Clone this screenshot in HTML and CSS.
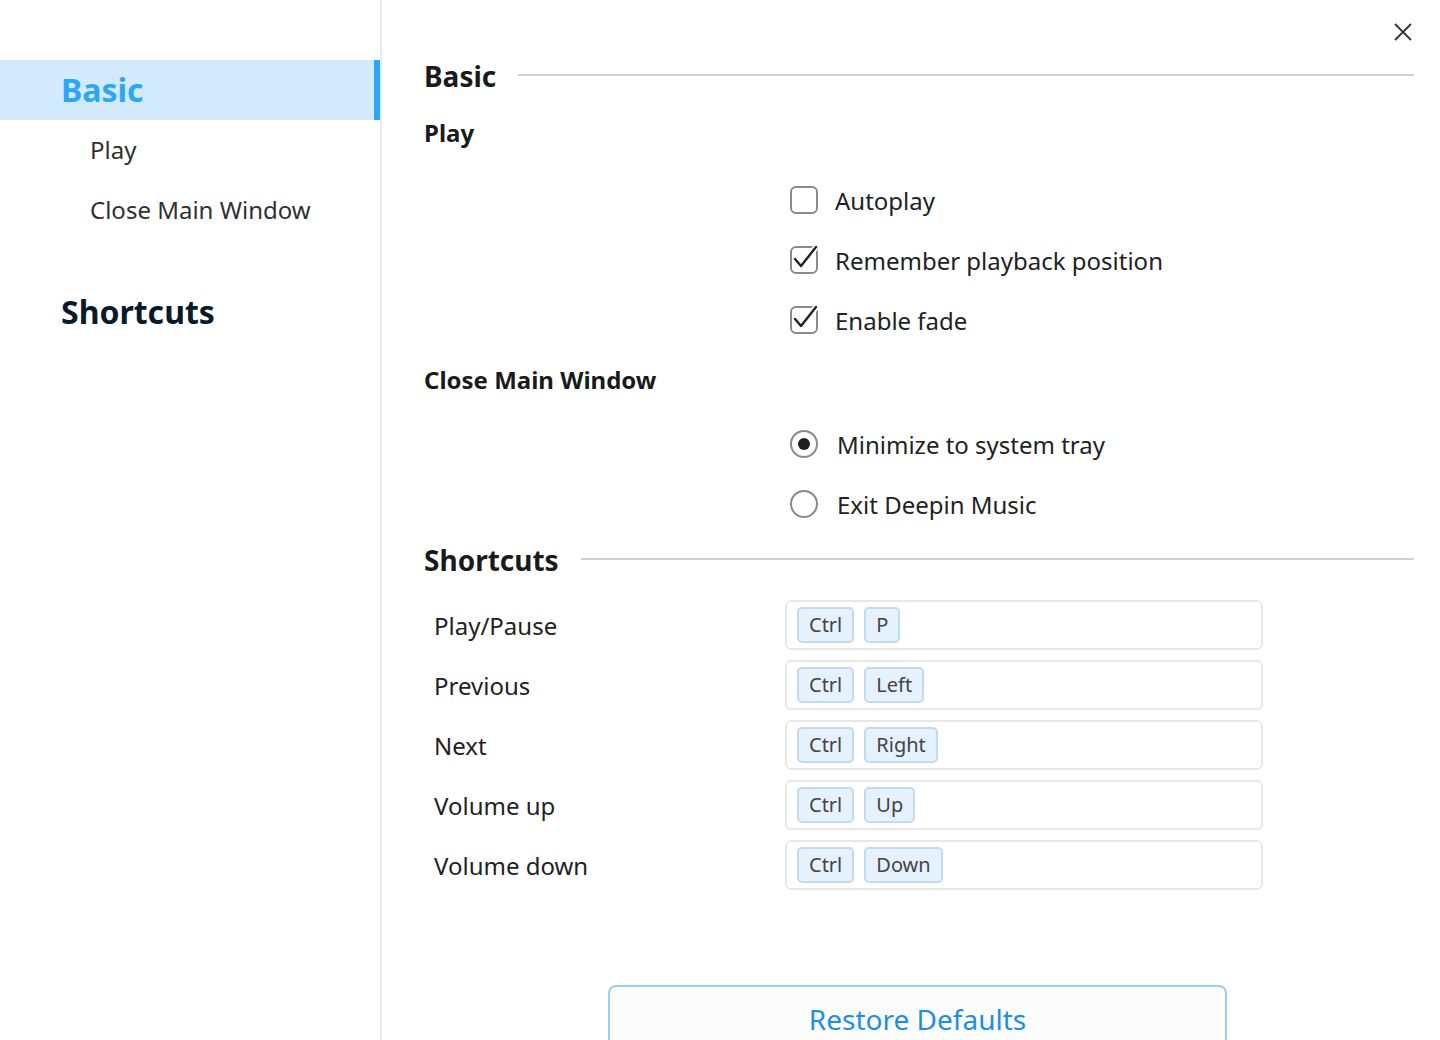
FILE: index.html
```html
<!DOCTYPE html>
<html>
<head>
<meta charset="utf-8">
<link rel="stylesheet" href="styles.css">
</head>
<body>
<div class="window">
  <nav class="sidebar">
    <div class="nav-group active">Basic</div>
    <div class="nav-item">Play</div>
    <div class="nav-item">Close Main Window</div>
    <div class="nav-group second">Shortcuts</div>
  </nav>
  <main class="content">
    <button class="close" aria-label="Close">
      <svg width="18" height="18" viewBox="0 0 18 18"><path d="M1 1L17 17M17 1L1 17" stroke="#333" stroke-width="1.8" fill="none"/></svg>
    </button>
    <div class="section-head"><span>Basic</span><div class="rule"></div></div>
    <div class="sub-head play-head">Play</div>
    <div class="options">
      <label class="opt"><svg class="cb" width="28" height="28" viewBox="0 0 28 28"><rect x="1" y="1" width="26" height="26" rx="5" fill="none" stroke="#8a8a8a" stroke-width="2"/></svg><span>Autoplay</span></label>
      <label class="opt"><svg class="cb" width="28" height="28" viewBox="0 0 28 28"><rect x="1" y="1" width="26" height="26" rx="5" fill="none" stroke="#8a8a8a" stroke-width="2"/><path d="M5 13L11 20L26 1" stroke="#fff" stroke-width="6" fill="none" stroke-linecap="round" stroke-linejoin="round"/><path d="M5 13L11 20L26 1" stroke="#222" stroke-width="2.4" fill="none" stroke-linecap="round" stroke-linejoin="round"/></svg><span>Remember playback position</span></label>
      <label class="opt"><svg class="cb" width="28" height="28" viewBox="0 0 28 28"><rect x="1" y="1" width="26" height="26" rx="5" fill="none" stroke="#8a8a8a" stroke-width="2"/><path d="M5 13L11 20L26 1" stroke="#fff" stroke-width="6" fill="none" stroke-linecap="round" stroke-linejoin="round"/><path d="M5 13L11 20L26 1" stroke="#222" stroke-width="2.4" fill="none" stroke-linecap="round" stroke-linejoin="round"/></svg><span>Enable fade</span></label>
    </div>
    <div class="sub-head close-head">Close Main Window</div>
    <div class="options radios">
      <label class="opt"><span class="rb on"></span><span>Minimize to system tray</span></label>
      <label class="opt"><span class="rb"></span><span>Exit Deepin Music</span></label>
    </div>
    <div class="section-head shortcuts-head"><span>Shortcuts</span><div class="rule"></div></div>
    <div class="shortcuts">
      <div class="sc-row"><span class="sc-label">Play/Pause</span><div class="sc-box"><span class="key">Ctrl</span><span class="key">P</span></div></div>
      <div class="sc-row"><span class="sc-label">Previous</span><div class="sc-box"><span class="key">Ctrl</span><span class="key">Left</span></div></div>
      <div class="sc-row"><span class="sc-label">Next</span><div class="sc-box"><span class="key">Ctrl</span><span class="key">Right</span></div></div>
      <div class="sc-row"><span class="sc-label">Volume up</span><div class="sc-box"><span class="key">Ctrl</span><span class="key">Up</span></div></div>
      <div class="sc-row"><span class="sc-label">Volume down</span><div class="sc-box"><span class="key">Ctrl</span><span class="key">Down</span></div></div>
    </div>
    <div class="btn-wrap"><button class="restore">Restore Defaults</button></div>
  </main>
</div>
</body>
</html>
```

FILE: styles.css
```css
html, body {
  margin: 0;
  padding: 0;
  background: #fff;
  height: 1040px;
  overflow: hidden;
}
body {
  font-family: "Noto Sans", "Open Sans", sans-serif;
  color: #1f1f1f;
}
.window {
  display: flex;
  height: 1040px;
}
.sidebar {
  width: 380px;
  flex: none;
  border-right: 2px solid #ececec;
  padding-top: 60px;
}
.nav-group {
  height: 60px;
  line-height: 60px;
  padding-left: 61px;
  font-size: 32px;
  font-weight: 700;
  color: #0a1a2b;
}
.nav-group.active {
  background: #d3eafd;
  color: #2ca7f8;
  box-shadow: inset -6px 0 0 #2ca7f8;
}
.nav-group.second {
  margin-top: 42px;
}
.nav-item {
  height: 60px;
  line-height: 60px;
  padding-left: 90px;
  font-size: 24px;
  color: #303030;
}
.content {
  flex: 1;
  position: relative;
  padding: 46px 26px 0 42px;
}
.close {
  position: absolute;
  top: 23px;
  right: 28px;
  width: 18px;
  height: 18px;
  padding: 0;
  border: 0;
  background: none;
}
.section-head {
  display: flex;
  align-items: center;
  height: 60px;
  gap: 22px;
}
.section-head span {
  font-size: 28px;
  font-weight: 700;
  color: #1a1a1a;
}
.rule {
  flex: 1;
  height: 2px;
  background: #d0d0d0;
  margin-top: -2px;
}
.sub-head {
  font-size: 24px;
  font-weight: 700;
  color: #1a1a1a;
  height: 54px;
  line-height: 54px;
}
.play-head {
  margin-bottom: 10px;
}
.close-head {
  height: 58px;
  line-height: 58px;
  margin-top: 1px;
  margin-bottom: 5px;
}
.options {
  padding-left: 366px;
}
.opt {
  display: flex;
  align-items: center;
  height: 60px;
  font-size: 24px;
  color: #222;
  gap: 17px;
}
.cb {
  flex: none;
  overflow: visible;
}
.rb {
  flex: none;
  width: 24px;
  height: 24px;
  border: 2px solid #8a8a8a;
  border-radius: 50%;
  display: flex;
  align-items: center;
  justify-content: center;
}
.radios .opt {
  gap: 19px;
}
.rb.on::after {
  content: "";
  width: 12px;
  height: 12px;
  border-radius: 50%;
  background: #1e1e1e;
}
.shortcuts-head {
  height: 52px;
  margin-bottom: 10px;
}
.shortcuts {
  margin-top: -1px;
}
.sc-row {
  display: flex;
  align-items: center;
  height: 60px;
}
.sc-label {
  width: 351px;
  padding-left: 10px;
  font-size: 24px;
  color: #222;
}
.sc-box {
  width: 464px;
  height: 46px;
  border: 2px solid #e8e8e8;
  border-radius: 6px;
  display: flex;
  align-items: center;
  gap: 10px;
  padding-left: 10px;
}
.key {
  height: 32px;
  line-height: 32px;
  padding: 0 10px;
  border: 2px solid #c2d9ef;
  border-radius: 5px;
  background: #e5f1fd;
  font-size: 20px;
  color: #444;
}
.btn-wrap {
  padding-top: 90px;
  padding-left: 184px;
}
.restore {
  width: 619px;
  height: 70px;
  border: 2px solid #9dcdf7;
  border-radius: 8px;
  background: #fcfcfc;
  font-family: "Noto Sans", "Open Sans", sans-serif;
  font-size: 28px;
  color: #1b8fe6;
  padding: 0 0 2px 0;
}
```
